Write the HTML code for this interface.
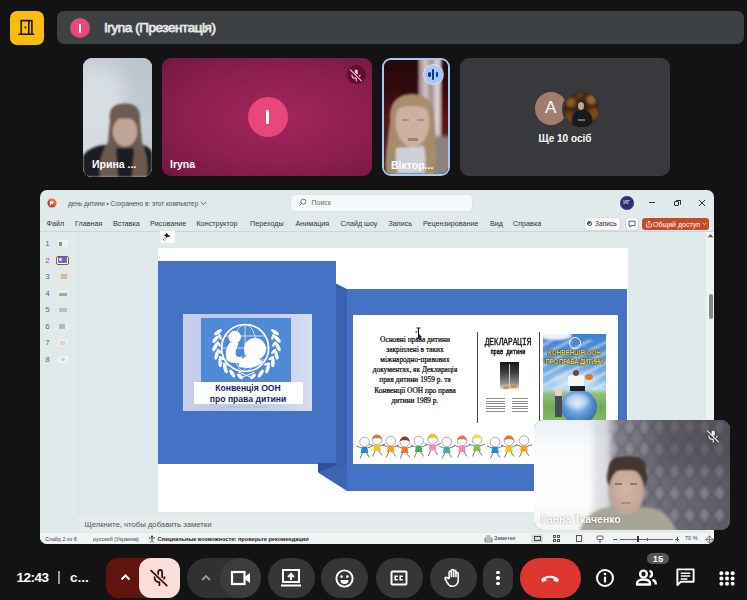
<!DOCTYPE html>
<html><head><meta charset="utf-8">
<style>
*{margin:0;padding:0;box-sizing:border-box}
html,body{width:747px;height:600px;overflow:hidden;background:#131313;font-family:"Liberation Sans",sans-serif}
.a{position:absolute}
#exit{left:10px;top:11px;width:34px;height:34px;background:#fbbd08;border-radius:7px}
#topbar{left:57px;top:11px;width:687px;height:33px;background:#3d4144;border-radius:7px}
#topbar .av{left:13px;top:7px;width:20px;height:20px;border-radius:50%;background:#e94a7d}
#topbar .t{left:47px;top:8.6px;font-size:13.4px;font-weight:normal;-webkit-text-stroke:0.75px #e6e6e6;letter-spacing:-0.38px;color:#e6e6e6;white-space:nowrap}
.tile{border-radius:9px;overflow:hidden}
#t1{left:83px;top:58px;width:69px;height:119px;background:#b8c2ca}
#t2{left:162px;top:58px;width:210px;height:118px;background:radial-gradient(ellipse at 55% 50%,#a2265b 0%,#8e1f50 55%,#74173f 100%)}
#t3{left:382px;top:58px;width:68px;height:118px;background:#4a1518;border:2px solid #a8c7fa}
#t4{left:460px;top:58px;width:210px;height:118px;background:#38393c}
.name{font-size:10.5px;font-weight:bold;color:#fff;white-space:nowrap}
#ppt{left:40px;top:190px;width:674px;height:354px;background:#e0eaeb;border-radius:7px;overflow:hidden}
.pt{white-space:nowrap;line-height:1}
.menu{top:219.8px;font-size:7.2px;color:#333;white-space:nowrap;line-height:1}
.num{left:44.5px;width:6px;text-align:center;font-size:8px;color:#666;line-height:1;margin-top:1.5px}
.btn{top:557.5px;width:47px;height:40.5px;background:#363638;border-radius:20.25px}
</style></head><body>
<div class="a" id="exit"><svg class="a" style="left:2px;top:3px" width="30" height="28" viewBox="0 0 30 28"><path d="M9.2 20.2V6.6h10.7v13.6M16.8 6.6v13.6" fill="none" stroke="#1f1700" stroke-width="1.6"/><path d="M7 20.2h14.7" stroke="#1f1700" stroke-width="1.6" stroke-linecap="round"/><circle cx="13.5" cy="13.5" r="0.95" fill="#1f1700"/></svg></div>
<div class="a" id="topbar"><div class="a av"></div><div class="a" style="left:22px;top:12.5px;width:2px;height:9px;background:#fff;border-radius:1px"></div><div class="a t">Iryna (Презентація)</div></div>
<div class="a tile" id="t1">
 <div class="a" style="left:0;top:0;width:69px;height:119px;background:linear-gradient(175deg,#c3cbd2 0%,#cdd4d9 40%,#c2cad0 70%,#b7c0c7 100%)"></div>
 <div class="a" style="left:-25px;top:10px;width:60px;height:120px;background:#dde3e7;transform:rotate(25deg);filter:blur(8px);opacity:.7"></div>
 <div class="a" style="left:40px;top:-10px;width:40px;height:70px;background:#b6c0c8;filter:blur(8px);opacity:.6"></div>
 <svg class="a" style="left:0;top:0" width="69" height="119" viewBox="0 0 69 119"><defs><filter id="b1" x="-20%" y="-20%" width="140%" height="140%"><feGaussianBlur stdDeviation="0.8"/></filter></defs>
  <g filter="url(#b1)">
  <path d="M0 98C4 91 14 87 22 87L60 87C66 89 69 92 69 96L69 119L0 119Z" fill="#1c1c21"/>
  <path d="M27 62C25 49 33 45.5 42 45.5C51 45.5 58 49 57 62L59 84C63 94 66 108 64 119L49 119L51 90L33 90L35 119L17 119C15 106 19 93 25 84Z" fill="#6a5a4f"/>
  <ellipse cx="42" cy="73.5" rx="12.3" ry="15" fill="#c0a597"/>
  <path d="M28.5 62C28 51 34 47 42 47C50 47 56 51 55.5 62C50 60 34 60 28.5 62Z" fill="#6c5c51"/>
  </g>
 </svg>
 <div class="a name" style="left:9px;top:100px">Ирина ...</div>
</div>
<div class="a tile" id="t2">
 <div class="a" style="left:86px;top:39px;width:40px;height:40px;border-radius:50%;background:#e8467d"></div>
 <div class="a" style="left:104.3px;top:51.5px;width:2.6px;height:14.5px;background:#fff;border-radius:1px"></div>
 <div class="a" style="left:184.5px;top:7px;width:19px;height:19px;border-radius:50%;background:#620e2f"></div>
 <svg class="a" style="left:184px;top:6.5px" width="20" height="20" viewBox="0 0 20 20"><path d="M8.6 9.6V6.1a1.6 1.6 0 0 1 3.2 0v3.5z" fill="#f4c8da"/><path d="M5.9 10c0 2 1.8 3.3 4.2 3.3M10.3 13.3v2.6M14 10.2l-.4 1" fill="none" stroke="#f4c8da" stroke-width="1.2" stroke-linecap="round"/><path d="M4.4 4.8L15.4 15.8" stroke="#620e2f" stroke-width="2.6"/><path d="M4.4 4.8L15.4 15.8" stroke="#f4c8da" stroke-width="1.2" stroke-linecap="round"/></svg>
 <div class="a name" style="left:8px;top:100px">Iryna</div>
</div>
<div class="a tile" id="t3">
 <div class="a" style="left:0;top:0;width:64px;height:114px;background:linear-gradient(180deg,#22090b 0%,#32090c 25%,#5a1214 50%,#5a1a18 75%,#3a1a18 100%)"></div>
 <div class="a" style="left:34px;top:-4px;width:24px;height:84px;background:linear-gradient(90deg,#8a7070,#d6c8c8 30%,#a08e8e 55%,#e4dcdc 80%,#9a8888);filter:blur(1px)"></div>
 <div class="a" style="left:48px;top:76px;width:20px;height:42px;background:#8c8280;filter:blur(2px)"></div>
 <svg class="a" style="left:0;top:0" width="64" height="114" viewBox="0 0 64 114"><defs><filter id="b3" x="-20%" y="-20%" width="140%" height="140%"><feGaussianBlur stdDeviation="1"/></filter></defs>
  <g filter="url(#b3)">
  <path d="M6 60C5 42 14 34 28 34C42 34 50 42 50 58L52 90C54 100 52 110 50 116L40 116L40 90L16 90L14 116L2 116C0 100 4 80 6 60Z" fill="#a68c68"/>
  <path d="M12 88L40 86C42 96 42 108 40 114L14 114C12 106 11 96 12 88Z" fill="#cfcfd6"/>
  <ellipse cx="28.5" cy="62" rx="17" ry="25" fill="#cdb0a0"/>
  <path d="M9 52C10 40 18 36 28 36C40 36 47 42 47 52C40 45 20 43 9 52Z" fill="#a88e6a"/>
  </g>
 </svg>
 <div class="a" style="left:18px;top:59px;width:7px;height:2px;background:#8a7070;opacity:.5;filter:blur(.6px)"></div>
 <div class="a" style="left:33px;top:59px;width:7px;height:2px;background:#8a7070;opacity:.5;filter:blur(.6px)"></div>
 <div class="a" style="left:24px;top:78px;width:10px;height:2.5px;background:#8a5a5a;opacity:.6;filter:blur(.7px)"></div>
 <div class="a" style="left:39.5px;top:4.5px;width:19.5px;height:19.5px;border-radius:50%;background:#a8c7fa;box-shadow:0 0 0 1px rgba(230,240,255,.7)"></div>
 <div class="a" style="left:44.3px;top:11.8px;width:2.4px;height:5px;border-radius:2px;background:#0b3a8c"></div>
 <div class="a" style="left:48.1px;top:8.8px;width:2.4px;height:11px;border-radius:2px;background:#0b3a8c"></div>
 <div class="a" style="left:51.9px;top:11.8px;width:2.4px;height:5px;border-radius:2px;background:#0b3a8c"></div>
 <div class="a name" style="left:7px;top:99px">Віктор...</div>
</div>
<div class="a tile" id="t4">
 <div class="a" style="left:74.5px;top:33.5px;width:32.5px;height:33px;border-radius:50%;background:#a17d6f"></div>
 <div class="a" style="left:74.5px;top:41px;width:32.5px;text-align:center;font-size:17px;color:#fff;line-height:17px">A</div>
 <div class="a" style="left:101.5px;top:31.5px;width:39px;height:39px;border-radius:50%;background:#38393c"></div>
 <div class="a" style="left:103.5px;top:33.5px;width:35px;height:35px;border-radius:50%;overflow:hidden;background:#3a2414">
  <div class="a" style="left:0;top:0;width:35px;height:35px;opacity:.8;background:radial-gradient(circle at 20% 30%,#a0642a 0 4px,transparent 6px),radial-gradient(circle at 78% 22%,#b0783a 0 4px,transparent 6px),radial-gradient(circle at 85% 62%,#8a5222 0 5px,transparent 7px),radial-gradient(circle at 15% 72%,#7a4a1e 0 5px,transparent 7px),radial-gradient(circle at 45% 10%,#6a4020 0 3px,transparent 5px);filter:blur(1.5px)"></div>
  <div class="a" style="left:13px;top:8px;width:9px;height:11px;border-radius:50%;background:#2a2220"></div>
  <div class="a" style="left:14.5px;top:10px;width:6px;height:8px;border-radius:50%;background:#c7a08e"></div>
  <div class="a" style="left:8px;top:18px;width:20px;height:20px;border-radius:9px 9px 0 0;background:#1a1a1c"></div>
  <div class="a" style="left:14px;top:27px;width:7px;height:2.5px;background:#d8d8d8;opacity:.45"></div>
 </div>
 <div class="a name" style="left:78.5px;top:75px;font-size:10px">Ще 10 осіб</div>
</div>
<div class="a" id="ppt"></div>
<!-- title row -->
<svg class="a" style="left:46.5px;top:197.5px" width="10" height="10" viewBox="0 0 10 10"><defs><linearGradient id="pg" x1="1" y1="0" x2="0" y2="1"><stop offset="0" stop-color="#ff9a5a"/><stop offset=".5" stop-color="#e8502a"/><stop offset="1" stop-color="#b8281e"/></linearGradient></defs><circle cx="5" cy="5" r="4.6" fill="url(#pg)"/><path d="M3 3.2h2.4a1.3 1.3 0 0 1 0 2.6H4V7.4H3z" fill="#fff"/></svg>
<div class="a pt" style="left:68px;top:200.5px;font-size:6.4px;color:#4f4f4f">день дитини • Сохранено в: этот компьютер</div>
<svg class="a" style="left:199.5px;top:201.3px" width="7" height="5" viewBox="0 0 7 5"><path d="M0.8 1l2.7 2.7L6.2 1" fill="none" stroke="#444" stroke-width="0.8"/></svg>
<div class="a" style="left:290.5px;top:194.5px;width:181px;height:16px;background:#f6f9f9;border-radius:4px;box-shadow:0 0 0 0.5px #d5dcdc"></div>
<svg class="a" style="left:298px;top:198px" width="9" height="9" viewBox="0 0 10 10"><circle cx="6" cy="4" r="2.8" fill="none" stroke="#555" stroke-width="0.9"/><path d="M4 6L1.2 8.8" stroke="#555" stroke-width="0.9"/></svg>
<div class="a pt" style="left:311.5px;top:199.3px;font-size:7px;color:#666">Поиск</div>
<div class="a" style="left:619.5px;top:195.5px;width:14px;height:14px;border-radius:50%;background:#2d3274"></div>
<div class="a pt" style="left:619.5px;top:199.5px;width:14px;text-align:center;font-size:5px;color:#fff">ИГ</div>
<div class="a" style="left:648.5px;top:202px;width:6px;height:0.9px;background:#333"></div>
<div class="a" style="left:675.5px;top:199.8px;width:5px;height:5px;border-top:0.9px solid #333;border-right:0.9px solid #333;border-radius:1px"></div><div class="a" style="left:674px;top:201px;width:5.3px;height:5.3px;border:0.9px solid #333;border-radius:1px"></div>
<svg class="a" style="left:698px;top:198.5px" width="8" height="8" viewBox="0 0 8 8"><path d="M1 1l6 6M7 1L1 7" stroke="#333" stroke-width="1"/></svg>
<!-- menu row -->
<div class="a menu" style="left:46.5px">Файл</div>
<div class="a menu" style="left:75px">Главная</div>
<div class="a menu" style="left:113px">Вставка</div>
<div class="a menu" style="left:150px">Рисование</div>
<div class="a menu" style="left:196.5px">Конструктор</div>
<div class="a menu" style="left:250px">Переходы</div>
<div class="a menu" style="left:295.5px">Анимация</div>
<div class="a menu" style="left:340.5px">Слайд шоу</div>
<div class="a menu" style="left:388.5px">Запись</div>
<div class="a menu" style="left:423px">Рецензирование</div>
<div class="a menu" style="left:490px">Вид</div>
<div class="a menu" style="left:513px">Справка</div>
<div class="a" style="left:584.5px;top:217.5px;width:35.5px;height:12px;background:#fbfcfc;border-radius:3px;box-shadow:0 0 0 0.6px #c9cfcf"></div>
<div class="a" style="left:586.5px;top:220.6px;width:5.6px;height:5.6px;border-radius:50%;border:0.8px solid #333"></div>
<div class="a" style="left:588.2px;top:222.3px;width:2.2px;height:2.2px;border-radius:50%;background:#222"></div>
<div class="a pt" style="left:595px;top:221px;font-size:6.6px;color:#222">Запись</div>
<div class="a" style="left:625.5px;top:217.5px;width:12px;height:12px;background:#fbfcfc;border-radius:3px;box-shadow:0 0 0 0.6px #c9cfcf"></div>
<svg class="a" style="left:627.5px;top:219.5px" width="8" height="8" viewBox="0 0 8 8"><path d="M1 1.2h6v4.3H3.3L1.8 7V5.5H1z" fill="none" stroke="#333" stroke-width="0.8"/></svg>
<div class="a" style="left:642px;top:217.5px;width:67px;height:12px;background:#c84a28;border-radius:3px"></div>
<svg class="a" style="left:645px;top:219.5px" width="8" height="8" viewBox="0 0 8 8"><path d="M1.5 3.5v3.5h5V3.5M4 5V1M2.6 2.4L4 1l1.4 1.4" fill="none" stroke="#fff" stroke-width="0.8"/></svg>
<div class="a pt" style="left:653px;top:220.8px;font-size:7px;color:#fff">Общий доступ</div>
<svg class="a" style="left:702px;top:222px" width="5" height="4" viewBox="0 0 5 4"><path d="M0.8 1l1.7 1.7L4.2 1" fill="none" stroke="#fff" stroke-width="0.8"/></svg>
<div class="a" style="left:40px;top:231px;width:674px;height:0.8px;background:#cdd5d5"></div>
<!-- left slide panel -->
<div class="a" style="left:77.5px;top:232px;width:0.8px;height:300px;background:#d8e1e1"></div>
<div class="a num" style="top:238px">1</div>
<div class="a num" style="top:255px;color:#c5462a">2</div>
<div class="a num" style="top:271px">3</div>
<div class="a num" style="top:288px">4</div>
<div class="a num" style="top:304.5px">5</div>
<div class="a num" style="top:321px">6</div>
<div class="a num" style="top:337.5px">7</div>
<div class="a num" style="top:354px">8</div>
<div class="a" style="opacity:.75;left:57.5px;top:240px;width:10px;height:7px;background:#f6f4f0"><div class="a" style="left:1px;top:2px;width:3px;height:4px;background:#7a6a5a"></div></div>
<div class="a" style="left:56px;top:255.5px;width:13px;height:9.5px;border:1.5px solid #b5452e;border-radius:2px;background:#fff"><div class="a" style="left:0.5px;top:0.5px;width:9px;height:5.5px;background:#4f78c4"></div><div class="a" style="left:1.5px;top:1.5px;width:3px;height:3px;background:#c8d4ee"></div></div>
<div class="a" style="opacity:.6;left:57.5px;top:273px;width:10px;height:7px;background:#efe5dc"><div class="a" style="left:3px;top:1px;width:6px;height:5px;background:#c49a80"></div></div>
<div class="a" style="opacity:.6;left:57.5px;top:290px;width:10px;height:7px;background:#f0efe8"><div class="a" style="left:1px;top:3px;width:8px;height:3px;background:#6a8a50"></div></div>
<div class="a" style="opacity:.6;left:57.5px;top:306px;width:10px;height:7px;background:#e8eef2"><div class="a" style="left:1px;top:2px;width:8px;height:4px;background:#8aa6c8"></div></div>
<div class="a" style="opacity:.6;left:57.5px;top:323px;width:10px;height:7px;background:#eef0ee"><div class="a" style="left:1px;top:1px;width:6px;height:5px;background:#8a9ab0"></div></div>
<div class="a" style="opacity:.6;left:57.5px;top:339px;width:10px;height:7px;background:#f6f2ea"><div class="a" style="left:2px;top:2px;width:5px;height:4px;background:#e0c8a8"></div></div>
<div class="a" style="opacity:.6;left:57.5px;top:356px;width:10px;height:7px;background:#f6f6f6"><div class="a" style="left:3px;top:2px;width:4px;height:3px;border-radius:50%;background:#c8b8b8"></div></div>
<!-- slide -->
<div class="a" style="left:157.5px;top:247.8px;width:470.5px;height:264.2px;background:#fff"></div>
<div class="a" style="left:158px;top:261px;width:178px;height:202.5px;background:#4472c4"></div>
<svg class="a" style="left:310px;top:280px" width="40" height="215" viewBox="310 280 40 215">
 <polygon points="336,283.5 347,289 347,491 336,470" fill="#3a62b0"/>
 <polygon points="318,463 337,463 337,469 318,472.5" fill="#2e5196"/>
 <polygon points="318,472.5 337,465 347,466 347,491" fill="#3b64b2"/>
</svg>
<div class="a" style="left:347px;top:289px;width:280px;height:202px;background:#4472c4"></div>
<div class="a" style="left:353px;top:315px;width:265px;height:148.5px;background:#fff"></div>
<!-- unicef card -->
<div class="a" style="left:182.5px;top:314px;width:129px;height:97px;background:linear-gradient(90deg,#c8d2ee 0%,#bcc8ea 25%,#c6d0ed 70%,#d6ddf1 100%)"></div>
<div class="a" style="left:200.5px;top:318px;width:90px;height:64px;background:#5089d6"></div>
<svg class="a" style="left:200.5px;top:318px" width="90" height="64" viewBox="0 0 90 64">
 <g fill="none" stroke="#fff">
  <circle cx="44.1" cy="30" r="23.5" stroke-width="1.7"/>
  <ellipse cx="44.1" cy="30" rx="11.5" ry="23.5" stroke-width="0.7"/>
  <path d="M20.6 30h47M23 18h42M23 42h42M44.1 6.5v47" stroke-width="0.7"/>
  <path d="M39.5 60L53.5 54M51.5 60L37.5 54" stroke-width="1"/>
 </g>
 <ellipse cx="39.0" cy="58.3" rx="3.5" ry="1.8" transform="rotate(222 39.0 58.3)" fill="#fff"/><ellipse cx="31.2" cy="55.6" rx="4.6" ry="1.8" transform="rotate(237 31.2 55.6)" fill="#fff"/><ellipse cx="24.4" cy="50.9" rx="4.6" ry="1.8" transform="rotate(252 24.4 50.9)" fill="#fff"/><ellipse cx="24.8" cy="46.1" rx="3.2" ry="1.3" transform="rotate(193 24.8 46.1)" fill="#fff"/><ellipse cx="19.1" cy="44.7" rx="4.6" ry="1.8" transform="rotate(267 19.1 44.7)" fill="#fff"/><ellipse cx="20.7" cy="40.1" rx="3.2" ry="1.3" transform="rotate(208 20.7 40.1)" fill="#fff"/><ellipse cx="15.5" cy="37.2" rx="4.6" ry="1.8" transform="rotate(282 15.5 37.2)" fill="#fff"/><ellipse cx="18.3" cy="33.3" rx="3.2" ry="1.3" transform="rotate(223 18.3 33.3)" fill="#fff"/><ellipse cx="14.0" cy="29.1" rx="4.6" ry="1.8" transform="rotate(297 14.0 29.1)" fill="#fff"/><ellipse cx="17.7" cy="26.0" rx="3.2" ry="1.3" transform="rotate(238 17.7 26.0)" fill="#fff"/><ellipse cx="14.7" cy="21.0" rx="4.6" ry="1.8" transform="rotate(312 14.7 21.0)" fill="#fff"/><ellipse cx="19.1" cy="18.9" rx="3.2" ry="1.3" transform="rotate(253 19.1 18.9)" fill="#fff"/><ellipse cx="17.0" cy="14.2" rx="4.6" ry="1.8" transform="rotate(325 17.0 14.2)" fill="#fff"/><ellipse cx="52.0" cy="58.3" rx="3.5" ry="1.8" transform="rotate(138 52.0 58.3)" fill="#fff"/><ellipse cx="59.8" cy="55.6" rx="4.6" ry="1.8" transform="rotate(123 59.8 55.6)" fill="#fff"/><ellipse cx="66.6" cy="50.9" rx="4.6" ry="1.8" transform="rotate(108 66.6 50.9)" fill="#fff"/><ellipse cx="66.2" cy="46.1" rx="3.2" ry="1.3" transform="rotate(167 66.2 46.1)" fill="#fff"/><ellipse cx="71.9" cy="44.7" rx="4.6" ry="1.8" transform="rotate(93 71.9 44.7)" fill="#fff"/><ellipse cx="70.3" cy="40.1" rx="3.2" ry="1.3" transform="rotate(152 70.3 40.1)" fill="#fff"/><ellipse cx="75.5" cy="37.2" rx="4.6" ry="1.8" transform="rotate(78 75.5 37.2)" fill="#fff"/><ellipse cx="72.7" cy="33.3" rx="3.2" ry="1.3" transform="rotate(137 72.7 33.3)" fill="#fff"/><ellipse cx="77.0" cy="29.1" rx="4.6" ry="1.8" transform="rotate(63 77.0 29.1)" fill="#fff"/><ellipse cx="73.3" cy="26.0" rx="3.2" ry="1.3" transform="rotate(122 73.3 26.0)" fill="#fff"/><ellipse cx="76.3" cy="21.0" rx="4.6" ry="1.8" transform="rotate(48 76.3 21.0)" fill="#fff"/><ellipse cx="71.9" cy="18.9" rx="3.2" ry="1.3" transform="rotate(107 71.9 18.9)" fill="#fff"/><ellipse cx="74.0" cy="14.2" rx="4.6" ry="1.8" transform="rotate(35 74.0 14.2)" fill="#fff"/>
 <circle cx="33.7" cy="19.1" r="6.3" fill="#fff"/>
 <path d="M29 24.5C24.5 29.5 23.5 38 26.5 42.5C30 46 38 46 42 43.5L41 38.5C37.5 39.5 35 39 34.5 36C34.5 32 36.5 28 37.5 25Z" fill="#fff"/>
 <circle cx="54" cy="31" r="11" fill="#fff"/>
 <path d="M46 38C40 41 36 46 38.5 49C45 51 57 50 62 44C59 41 54 40 50 39Z" fill="#fff"/>
</svg>
<div class="a" style="left:193.5px;top:381.5px;width:109px;height:22.5px;background:#fff"></div>
<div class="a pt" style="left:193.5px;top:384px;width:109px;text-align:center;font-size:8.6px;font-weight:bold;color:#161c72">Конвенція ООН</div>
<div class="a pt" style="left:193.5px;top:394.5px;width:109px;text-align:center;font-size:8.6px;font-weight:bold;color:#161c72">про права дитини</div>
<div class="a pt" style="left:193.5px;top:405px;width:109px;text-align:center;font-size:4px;color:#a8b0c8">Презентацію зробила</div>
<!-- text -->
<div class="a" style="left:355px;top:334.5px;width:120px;text-align:center;font-family:'Liberation Serif',serif;font-size:7.4px;line-height:10.2px;color:#000;-webkit-text-stroke:0.2px #000">Основні права дитини<br>закріплені в таких<br>міжнародно-правових<br>документах, як Декларація<br>прав дитини 1959 р. та<br>Конвенції ООН про права<br>дитини 1989 р.</div>
<svg class="a" style="left:414px;top:327px" width="9" height="14" viewBox="0 0 9 14"><path d="M4.5 1v10M2.5 1h4M2.5 11h4M1.5 5h2" stroke="#111" stroke-width="1" fill="none"/><path d="M5 7l3 3-1.5.3 1 2-0.8.4-1-2L4.5 12z" fill="#222"/></svg>
<!-- declaration -->
<div class="a" style="left:476.8px;top:331.5px;width:0.9px;height:91.5px;background:#444"></div>
<div class="a" style="left:539.2px;top:331.5px;width:0.9px;height:91.5px;background:#444"></div>
<div class="a pt" style="left:468px;top:337px;width:80px;text-align:center;font-family:'Liberation Mono',monospace;font-size:10.5px;color:#111;-webkit-text-stroke:0.35px #111;transform:scaleX(.74);transform-origin:50% 0">ДЕКЛАРАЦІЯ</div>
<div class="a pt" style="left:468px;top:349px;width:80px;text-align:center;font-family:'Liberation Mono',monospace;font-size:7.4px;color:#111;-webkit-text-stroke:0.45px #111;transform:scaleX(.72);transform-origin:50% 0">прав дитини</div>
<div class="a" style="left:500px;top:362px;width:18.6px;height:28px;background:linear-gradient(180deg,#161616 0%,#3a3a3a 35%,#8a8a8a 75%,#f4f4f4 100%)"></div>
<div class="a" style="left:508.8px;top:364px;width:0.9px;height:22px;background:#cfcfcf"></div>
<div class="a" style="left:503px;top:386px;width:6px;height:3px;background:#c8962c;border-radius:50%"></div>
<div class="a" style="left:510px;top:385px;width:7px;height:3px;background:#c8962c;border-radius:50%"></div>
<div class="a" style="left:485.5px;top:397.5px;width:19px;height:14px;background:repeating-linear-gradient(180deg,#666 0 0.9px,transparent 0.9px 2.6px);opacity:.75"></div>
<div class="a" style="left:512px;top:397.5px;width:16px;height:14px;background:repeating-linear-gradient(180deg,#666 0 0.9px,transparent 0.9px 2.6px);opacity:.75"></div>
<!-- poster -->
<div class="a" style="left:542.5px;top:334px;width:63.5px;height:86px;overflow:hidden;background:linear-gradient(180deg,#3f80cc 0%,#5b98d8 30%,#8dbce6 55%,#b6d6ee 64%,#8fbf78 70%,#6fae55 85%,#82bb62 100%)">
 <div class="a" style="left:-10px;top:6px;width:90px;height:50px;opacity:.5;background:repeating-linear-gradient(-28deg,transparent 0 4px,#fff 4px 6.5px,transparent 6.5px 9px);filter:blur(.9px)"></div>
 <div class="a" style="left:-5px;top:-3px;width:34px;height:9px;background:#eaf2fa;border-radius:50%;filter:blur(1px)"></div>
 <div class="a" style="left:10px;top:38px;width:44px;height:16px;background:#e8f2fa;opacity:.6;border-radius:50%;filter:blur(3px)"></div>
 <div class="a" style="left:26px;top:2.5px;width:12px;height:12px;border-radius:50%;border:1.2px solid #fff"></div>
 <div class="a pt" style="left:0;top:15.5px;width:63.5px;text-align:center;font-size:6.3px;font-weight:bold;color:#f8d81c;letter-spacing:-0.05px;text-shadow:0 0 1px #1a2a70,0 0 1px #1a2a70,0 0 1px #1a2a70">КОНВЕНЦІЯ ООН</div>
 <div class="a pt" style="left:0;top:24.5px;width:63.5px;text-align:center;font-size:6.3px;font-weight:bold;color:#f8d81c;letter-spacing:-0.45px;text-shadow:0 0 1px #1a2a70,0 0 1px #1a2a70,0 0 1px #1a2a70">ПРО ПРАВА ДИТИНИ</div>
 <div class="a" style="left:18px;top:56px;width:36px;height:34px;border-radius:50%;background:radial-gradient(circle at 45% 40%,#c8e2f6 0%,#6aa4dc 35%,#3a74b8 70%,#2a5a90 100%)"></div>
 <div class="a" style="left:22px;top:60px;width:24px;height:14px;border-radius:50%;background:#f0f6fb;opacity:.55;filter:blur(2px)"></div>
 <div class="a" style="left:25px;top:41px;width:16px;height:11px;background:#f6f6f6;border-radius:3px 3px 1px 1px"></div>
 <div class="a" style="left:30.5px;top:36px;width:6px;height:6px;border-radius:50%;background:#6a4a3a"></div>
 <div class="a" style="left:27px;top:52px;width:15px;height:5px;background:#1e1e24"></div>
 <div class="a" style="left:42px;top:40px;width:8px;height:6px;border-radius:50%;background:#e07a28"></div>
 <div class="a" style="left:12px;top:54px;width:7px;height:8px;border-radius:50% 50% 2px 2px;background:#e4d4be"></div>
 <div class="a" style="left:12px;top:62px;width:7px;height:21px;background:#4a4a58"></div>
</div>
<!-- kids -->
<svg class="a" style="left:355px;top:433.5px" width="180" height="27" viewBox="0 0 180 27"><circle cx="9.5" cy="8" r="4.8" fill="#fff" stroke="#777" stroke-width="0.6"/><path d="M6.7 13h5.6l1 6h-7.6z" fill="#2a86d6"/><path d="M1.5 12l5 2M12.5 14l5-2M7.5 19l-2.5 5.5M11.5 19l3 4.5" stroke="#555" stroke-width="0.8" fill="none"/><circle cx="22.0" cy="6" r="4.8" fill="#fff" stroke="#777" stroke-width="0.6"/><path d="M17.1 5.5a4.9 4.9 0 0 1 9.8 0c-2.3-1.6-7.5-1.6-9.8 0z" fill="#d87a3a"/><path d="M19.2 11h5.6l1 6h-7.6z" fill="#f2c21e"/><path d="M14.0 10l5 2M25.0 12l5-2M20.0 17l-2.5 5.5M24.0 17l3 4.5" stroke="#555" stroke-width="0.8" fill="none"/><circle cx="35.7" cy="7" r="4.8" fill="#fff" stroke="#777" stroke-width="0.6"/><path d="M32.9 12h5.6l1 6h-7.6z" fill="#f4a020"/><path d="M27.7 11l5 2M38.7 13l5-2M33.7 18l-2.5 5.5M37.7 18l3 4.5" stroke="#555" stroke-width="0.8" fill="none"/><circle cx="49.7" cy="8" r="4.8" fill="#fff" stroke="#777" stroke-width="0.6"/><path d="M44.8 7.5a4.9 4.9 0 0 1 9.8 0c-2.3-1.6-7.5-1.6-9.8 0z" fill="#7a4a2a"/><path d="M46.9 13h5.6l1 6h-7.6z" fill="#ee7a2e"/><path d="M41.7 12l5 2M52.7 14l5-2M47.7 19l-2.5 5.5M51.7 19l3 4.5" stroke="#555" stroke-width="0.8" fill="none"/><circle cx="63.7" cy="7" r="4.8" fill="#fff" stroke="#777" stroke-width="0.6"/><path d="M60.9 12h5.6l1 6h-7.6z" fill="#3fae5e"/><path d="M55.7 11l5 2M66.7 13l5-2M61.7 18l-2.5 5.5M65.7 18l3 4.5" stroke="#555" stroke-width="0.8" fill="none"/><circle cx="77.7" cy="5.5" r="4.8" fill="#fff" stroke="#777" stroke-width="0.6"/><path d="M72.8 5.0a4.9 4.9 0 0 1 9.8 0c-2.3-1.6-7.5-1.6-9.8 0z" fill="#f2b82a"/><path d="M74.9 10.5h5.6l1 6h-7.6z" fill="#f48ab6"/><path d="M69.7 9.5l5 2M80.7 11.5l5-2M75.7 16.5l-2.5 5.5M79.7 16.5l3 4.5" stroke="#555" stroke-width="0.8" fill="none"/><circle cx="91.7" cy="8" r="4.8" fill="#fff" stroke="#777" stroke-width="0.6"/><path d="M88.9 13h5.6l1 6h-7.6z" fill="#4aa8a8"/><path d="M83.7 12l5 2M94.7 14l5-2M89.7 19l-2.5 5.5M93.7 19l3 4.5" stroke="#555" stroke-width="0.8" fill="none"/><circle cx="107.0" cy="7" r="4.8" fill="#fff" stroke="#777" stroke-width="0.6"/><path d="M102.1 6.5a4.9 4.9 0 0 1 9.8 0c-2.3-1.6-7.5-1.6-9.8 0z" fill="#d8804a"/><path d="M104.2 12h5.6l1 6h-7.6z" fill="#f08ab0"/><path d="M99.0 11l5 2M110.0 13l5-2M105.0 18l-2.5 5.5M109.0 18l3 4.5" stroke="#555" stroke-width="0.8" fill="none"/><circle cx="122.0" cy="6" r="4.8" fill="#fff" stroke="#777" stroke-width="0.6"/><path d="M117.1 5.5a4.9 4.9 0 0 1 9.8 0c-2.3-1.6-7.5-1.6-9.8 0z" fill="#f2d85a"/><path d="M119.2 11h5.6l1 6h-7.6z" fill="#86c24a"/><path d="M114.0 10l5 2M125.0 12l5-2M120.0 17l-2.5 5.5M124.0 17l3 4.5" stroke="#555" stroke-width="0.8" fill="none"/><circle cx="140.0" cy="8" r="4.8" fill="#fff" stroke="#777" stroke-width="0.6"/><path d="M137.2 13h5.6l1 6h-7.6z" fill="#2a86d6"/><path d="M132.0 12l5 2M143.0 14l5-2M138.0 19l-2.5 5.5M142.0 19l3 4.5" stroke="#555" stroke-width="0.8" fill="none"/><circle cx="154.0" cy="7" r="4.8" fill="#fff" stroke="#777" stroke-width="0.6"/><path d="M149.1 6.5a4.9 4.9 0 0 1 9.8 0c-2.3-1.6-7.5-1.6-9.8 0z" fill="#d87a3a"/><path d="M151.2 12h5.6l1 6h-7.6z" fill="#f2c21e"/><path d="M146.0 11l5 2M157.0 13l5-2M152.0 18l-2.5 5.5M156.0 18l3 4.5" stroke="#555" stroke-width="0.8" fill="none"/><circle cx="169.0" cy="6.5" r="4.8" fill="#fff" stroke="#777" stroke-width="0.6"/><path d="M166.2 11.5h5.6l1 6h-7.6z" fill="#f4a020"/><path d="M161.0 10.5l5 2M172.0 12.5l5-2M167.0 17.5l-2.5 5.5M171.0 17.5l3 4.5" stroke="#555" stroke-width="0.8" fill="none"/></svg>
<!-- designer icon -->
<div class="a" style="left:159.5px;top:231px;width:15px;height:12px;background:#fbfcfc;border-radius:0 0 2px 2px"></div>
<svg class="a" style="left:161px;top:231.5px" width="12" height="10" viewBox="0 0 12 10"><path d="M5.7 0.8l1.1 1.6 1.6 1.1-1.6 1.1-1.1 1.6-1.1-1.6-1.6-1.1 1.6-1.1z" fill="#111"/><circle cx="8.1" cy="4.3" r="0.9" fill="#222"/><g fill="#777"><circle cx="3.2" cy="5.5" r="0.5"/><circle cx="4.4" cy="6.7" r="0.5"/><circle cx="2.6" cy="7.4" r="0.5"/><circle cx="3.6" cy="8.4" r="0.5"/></g></svg>
<!-- scrollbar -->
<div class="a" style="left:705.5px;top:232px;width:8.5px;height:300px;background:#eef2f2"></div>
<svg class="a" style="left:707px;top:233px" width="7" height="5" viewBox="0 0 7 5"><path d="M0.8 4.2L3.5 1l2.7 3.2z" fill="#555"/></svg>
<div class="a" style="left:709px;top:294px;width:3.5px;height:25px;background:#85898a;border-radius:2px"></div>
<!-- notes -->
<div class="a" style="left:78px;top:515.5px;width:627.5px;height:0.8px;background:#d3dbdb"></div><div class="a" style="left:78px;top:516.3px;width:627.5px;height:16px;background:#e4ebeb"></div>
<div class="a pt" style="left:84.5px;top:520.5px;font-size:7.7px;color:#555">Щелкните, чтобы добавить заметки</div>
<!-- status bar -->
<div class="a" style="left:40px;top:533px;width:674px;height:10.5px;background:#f1f4f4;border-radius:0 0 7px 7px"></div>
<div class="a pt" style="left:45px;top:537.2px;font-size:5.3px;color:#444">Слайд 2 из 8</div>
<div class="a pt" style="left:93px;top:537.2px;font-size:5.5px;color:#444">русский (Украина)</div>
<svg class="a" style="left:148px;top:535px" width="8" height="8" viewBox="0 0 8 8"><circle cx="4" cy="1.5" r="1" fill="#333"/><path d="M1 3h6M4 3v2.5L2.5 7.5M4 5.5l1.5 2" fill="none" stroke="#333" stroke-width="0.8"/></svg>
<div class="a pt" style="left:157.5px;top:537px;font-size:5.6px;font-weight:bold;color:#222">Специальные возможности: проверьте рекомендации</div>
<svg class="a" style="left:484px;top:534.5px" width="9" height="8" viewBox="0 0 9 8"><path d="M1 3h7v4H1zM1 5h7M2.5 1h4" fill="none" stroke="#555" stroke-width="0.7"/></svg>
<div class="a pt" style="left:494px;top:535.5px;font-size:5.6px;color:#333">Заметки</div>
<div class="a" style="left:531px;top:533.5px;width:12px;height:9.5px;background:#d6dcdc;border-radius:1.5px"></div>
<div class="a" style="left:533.5px;top:535.5px;width:7px;height:5.5px;border:0.8px solid #444"></div>
<div class="a" style="left:553px;top:535px;width:3px;height:3px;border:0.7px solid #555"></div><div class="a" style="left:557px;top:535px;width:3px;height:3px;border:0.7px solid #555"></div>
<div class="a" style="left:553px;top:539px;width:3px;height:3px;border:0.7px solid #555"></div><div class="a" style="left:557px;top:539px;width:3px;height:3px;border:0.7px solid #555"></div>
<div class="a" style="left:575.5px;top:535px;width:6.5px;height:7px;border:0.8px solid #555"></div>
<svg class="a" style="left:596px;top:534.5px" width="8" height="8" viewBox="0 0 8 8"><path d="M1 1h6v3.5H1zM4 4.5V7M2.5 7h3" fill="none" stroke="#555" stroke-width="0.8"/></svg>
<div class="a" style="left:613px;top:538.5px;width:4px;height:0.8px;background:#555"></div>
<div class="a" style="left:620px;top:538.5px;width:53px;height:0.8px;background:#666"></div>
<div class="a" style="left:637px;top:536px;width:2px;height:6px;background:#333"></div>
<div class="a" style="left:646.5px;top:537.5px;width:0.8px;height:3px;background:#666"></div>
<div class="a" style="left:675px;top:538.5px;width:4px;height:0.8px;background:#555"></div><div class="a" style="left:676.6px;top:536.9px;width:0.8px;height:4px;background:#555"></div>
<div class="a pt" style="left:685px;top:535.5px;font-size:5.6px;color:#444">70 %</div>
<svg class="a" style="left:704.5px;top:534.5px" width="9" height="9" viewBox="0 0 9 9"><path d="M4.5 0.5v8M0.5 4.5h8" stroke="#555" stroke-width="0.7"/><rect x="2" y="2" width="5" height="5" fill="none" stroke="#555" stroke-width="0.7" transform="rotate(45 4.5 4.5)"/></svg>

<!-- hanna video -->
<div class="a tile" style="left:534px;top:420px;width:196px;height:110px;border-radius:9px;overflow:hidden;background:#7c7f89">
 <div class="a" style="left:0;top:0;width:196px;height:110px;background:linear-gradient(90deg,#92939d 0%,#878892 35%,#72727c 60%,#5e5b66 100%)"></div>
 <svg class="a" style="left:55px;top:0;filter:blur(1.4px)" width="141" height="110" viewBox="0 0 141 110"><defs><pattern id="lat" x="3" y="-4" width="15" height="22" patternUnits="userSpaceOnUse"><path d="M7.5 1C10 5 13.5 8 13.5 11S10 17 7.5 21C5 17 1.5 14 1.5 11S5 5 7.5 1z" fill="#9a97a2" stroke="#55525c" stroke-width="2.6"/></pattern></defs><rect width="141" height="110" fill="url(#lat)" opacity=".5"/></svg>
 <div class="a" style="left:120px;top:-20px;width:100px;height:70px;background:#47434c;opacity:.45;filter:blur(10px)"></div>
 <div class="a" style="left:-20px;top:-10px;width:96px;height:130px;background:linear-gradient(180deg,#e4ebf2 0%,#fbfcfd 30%,#fdfdfd 70%,#f0f0f0 100%);filter:blur(4px)"></div>
 <div class="a" style="left:60px;top:-5px;width:14px;height:120px;background:#b9bec6;opacity:.5;filter:blur(4px)"></div>
 <div class="a" style="left:44px;top:87px;width:100px;height:34px;background:#a6a596;border-radius:34px 34px 0 0;filter:blur(1.5px)"></div>
 <div class="a" style="left:73px;top:36.5px;width:40px;height:32px;background:#43352f;border-radius:20px 20px 10px 10px;filter:blur(1.2px)"></div>
 <div class="a" style="left:75px;top:48px;width:35px;height:47px;background:radial-gradient(ellipse at 50% 45%,#d2b6a8,#c0a294 80%);border-radius:45% 45% 50% 50%;filter:blur(1px)"></div>
 <div class="a" style="left:74.5px;top:37px;width:37px;height:13px;background:#45372f;border-radius:18px 18px 5px 5px;filter:blur(.8px)"></div>
 <div class="a" style="left:81px;top:63px;width:7px;height:2px;background:#6a5048;opacity:.6;filter:blur(.7px)"></div>
 <div class="a" style="left:96px;top:63px;width:7px;height:2px;background:#6a5048;opacity:.6;filter:blur(.7px)"></div>
 <div class="a" style="left:87px;top:82px;width:10px;height:1.5px;background:#9a6a60;opacity:.5;filter:blur(.6px)"></div>
 <svg class="a" style="left:169px;top:6.3px;filter:drop-shadow(0 0 1px rgba(0,0,0,.5))" width="20" height="20" viewBox="0 0 20 20"><path d="M8.6 9.6V6.1a1.6 1.6 0 0 1 3.2 0v3.5z" fill="#f0f0f0"/><path d="M5.9 10c0 2 1.8 3.3 4.2 3.3M10.3 13.3v2.6M14 10.2l-.4 1" fill="none" stroke="#f0f0f0" stroke-width="1.2" stroke-linecap="round"/><path d="M4.4 4.8L15.4 15.8" stroke="#f0f0f0" stroke-width="1.2" stroke-linecap="round"/></svg>
 <div class="a name" style="left:7px;top:92.5px;text-shadow:0 0 2px rgba(0,0,0,.45)">Ганна Ткаченко</div>
</div>
<!-- bottom bar -->
<div class="a pt" style="left:16.5px;top:571px;font-size:13.5px;font-weight:bold;letter-spacing:-0.5px;color:#fff">12:43</div>
<div class="a" style="left:58px;top:571px;width:1.5px;height:13px;background:#9a9a9a"></div>
<div class="a pt" style="left:70px;top:571px;font-size:13.5px;font-weight:bold;color:#fff">с...</div>
<div class="a" style="left:105.5px;top:557.5px;width:50px;height:40.5px;background:#601410;border-radius:12px 0 0 12px"></div>
<svg class="a" style="left:119px;top:572px" width="13" height="10" viewBox="0 0 13 10"><path d="M2.5 7.5l4-4 4 4" fill="none" stroke="#fff" stroke-width="2"/></svg>
<div class="a" style="left:139px;top:557.5px;width:41px;height:40.5px;background:#f9dedc;border-radius:12px"></div>
<svg class="a" style="left:145px;top:565px" width="30" height="27" viewBox="0 0 30 27"><path d="M13.1 10.4V7a2 2 0 0 1 4 0v5.2M9.5 12.2c0 2.8 2.2 5 4.9 5M14.4 17.2v3M19.5 12.2l-.5 1.5" fill="none" stroke="#410e0b" stroke-width="1.8" stroke-linecap="round"/><path d="M6.1 5.6L21.8 20.7" stroke="#f9dedc" stroke-width="3.4"/><path d="M6.1 5.6L21.8 20.7" stroke="#410e0b" stroke-width="1.8" stroke-linecap="round"/></svg>
<div class="a" style="left:187px;top:557.5px;width:73.5px;height:40.5px;background:#303133;border-radius:20.25px"></div>
<div class="a" style="left:220px;top:557.5px;width:40.5px;height:40.5px;background:#3b3c3e;border-radius:50%"></div>
<svg class="a" style="left:199.5px;top:573px" width="12" height="9" viewBox="0 0 12 9"><path d="M2 7l4-4 4 4" fill="none" stroke="#9a9a9a" stroke-width="1.8"/></svg>
<svg class="a" style="left:230px;top:568px" width="22" height="20" viewBox="0 0 22 20"><rect x="2" y="4" width="12.5" height="12" fill="none" stroke="#fff" stroke-width="2.2"/><path d="M14.5 9l5.5-4v10l-5.5-4z" fill="#fff"/></svg>
<div class="a btn" style="left:267.5px"></div>
<svg class="a" style="left:280px;top:568px" width="22" height="20" viewBox="0 0 22 20"><rect x="3" y="2" width="16" height="12" fill="none" stroke="#fff" stroke-width="2"/><path d="M1 17.5h20" stroke="#fff" stroke-width="2"/><path d="M11 12V6.5M8 9l3-3 3 3" fill="none" stroke="#fff" stroke-width="2"/></svg>
<div class="a btn" style="left:321px"></div>
<svg class="a" style="left:334px;top:567.5px" width="21" height="21" viewBox="0 0 22 22"><circle cx="11" cy="11" r="8.5" fill="none" stroke="#fff" stroke-width="2"/><circle cx="8" cy="9" r="1.4" fill="#fff"/><circle cx="14" cy="9" r="1.4" fill="#fff"/><path d="M6.8 12.5h8.4a4.2 4.2 0 0 1-8.4 0z" fill="#fff"/></svg>
<div class="a btn" style="left:375.5px"></div>
<svg class="a" style="left:389.5px;top:570px" width="18" height="16" viewBox="0 0 18 16"><rect x="1.5" y="1.5" width="15" height="13" rx="1" fill="none" stroke="#fff" stroke-width="2"/><path d="M7.8 6.2H5.2v3.6h2.6M12.8 6.2h-2.6v3.6h2.6" fill="none" stroke="#fff" stroke-width="1.6"/></svg>
<div class="a btn" style="left:430px"></div>
<svg class="a" style="left:443px;top:567px" width="21" height="22" viewBox="0 0 24 24"><path d="M7 13V5.5a1.3 1.3 0 0 1 2.6 0V11M9.6 11V3.5a1.3 1.3 0 0 1 2.6 0V11M12.2 11V4.5a1.3 1.3 0 0 1 2.6 0V11M14.8 11V7a1.3 1.3 0 0 1 2.6 0v7.5c0 4-2.8 7-6.5 7-2.8 0-4.5-1.5-6-4l-2.5-4.5a1.3 1.3 0 0 1 2.2-1.3L7 13" fill="none" stroke="#fff" stroke-width="1.8" stroke-linejoin="round"/></svg>
<div class="a" style="left:483px;top:557.5px;width:30px;height:40.5px;background:#363638;border-radius:15px"></div>
<div class="a" style="left:496.3px;top:570.5px;width:3.4px;height:3.4px;border-radius:50%;background:#fff"></div>
<div class="a" style="left:496.3px;top:576.3px;width:3.4px;height:3.4px;border-radius:50%;background:#fff"></div>
<div class="a" style="left:496.3px;top:582.1px;width:3.4px;height:3.4px;border-radius:50%;background:#fff"></div>
<div class="a" style="left:520px;top:557.5px;width:60.5px;height:40.5px;background:#dc362e;border-radius:20.25px"></div>
<svg class="a" style="left:539px;top:571px" width="22" height="14" viewBox="0 0 22 14"><path d="M2 8.5c5-5 13-5 18 0l-1.5 2.8-3.8-1.5V7.4c-2.4-.8-5-.8-7.4 0v2.4L3.5 11.3z" fill="#fff"/></svg>
<svg class="a" style="left:595.3px;top:568px" width="20" height="20" viewBox="0 0 20 20"><circle cx="10" cy="10" r="8" fill="none" stroke="#fff" stroke-width="2"/><path d="M10 8.8v5.6" stroke="#fff" stroke-width="2.2"/><circle cx="10" cy="6" r="1.3" fill="#fff"/></svg>
<svg class="a" style="left:634.5px;top:569px" width="23" height="18" viewBox="0 0 23 18"><circle cx="8.5" cy="5" r="3.4" fill="none" stroke="#fff" stroke-width="2.4"/><path d="M2 15.5v-1c0-2.6 3-4 6.5-4s6.5 1.4 6.5 4v1z" fill="none" stroke="#fff" stroke-width="2.4" stroke-linejoin="round"/><path d="M14.5 1.8a3.3 3.3 0 0 1 0 6.4M17.5 10.8c1.8.6 3.2 1.8 3.2 3.6v1.1" fill="none" stroke="#fff" stroke-width="2.4"/></svg>
<div class="a" style="left:646.7px;top:552.5px;width:22.7px;height:11.5px;background:#545557;border-radius:5.75px"></div>
<div class="a pt" style="left:646.7px;top:553.5px;width:22.7px;text-align:center;font-size:9.5px;font-weight:bold;color:#fff">15</div>
<svg class="a" style="left:675px;top:567px" width="21" height="21" viewBox="0 0 22 22"><path d="M2.5 2.5h17v13H6l-3.5 3.5z" fill="none" stroke="#fff" stroke-width="2" stroke-linejoin="round"/><path d="M6 6.5h10M6 9.5h10M6 12.5h7" stroke="#fff" stroke-width="1.6"/></svg>
<svg class="a" style="left:719px;top:570.5px" width="16" height="15" viewBox="0 0 16 15"><g fill="#fff"><circle cx="2.4" cy="2.2" r="2"/><circle cx="8" cy="2.2" r="2"/><circle cx="13.6" cy="2.2" r="2"/><circle cx="2.4" cy="7.5" r="2"/><circle cx="8" cy="7.5" r="2"/><circle cx="13.6" cy="7.5" r="2"/><circle cx="2.4" cy="12.8" r="2"/><circle cx="8" cy="12.8" r="2"/><circle cx="13.6" cy="12.8" r="2"/></g></svg>
</body></html>
